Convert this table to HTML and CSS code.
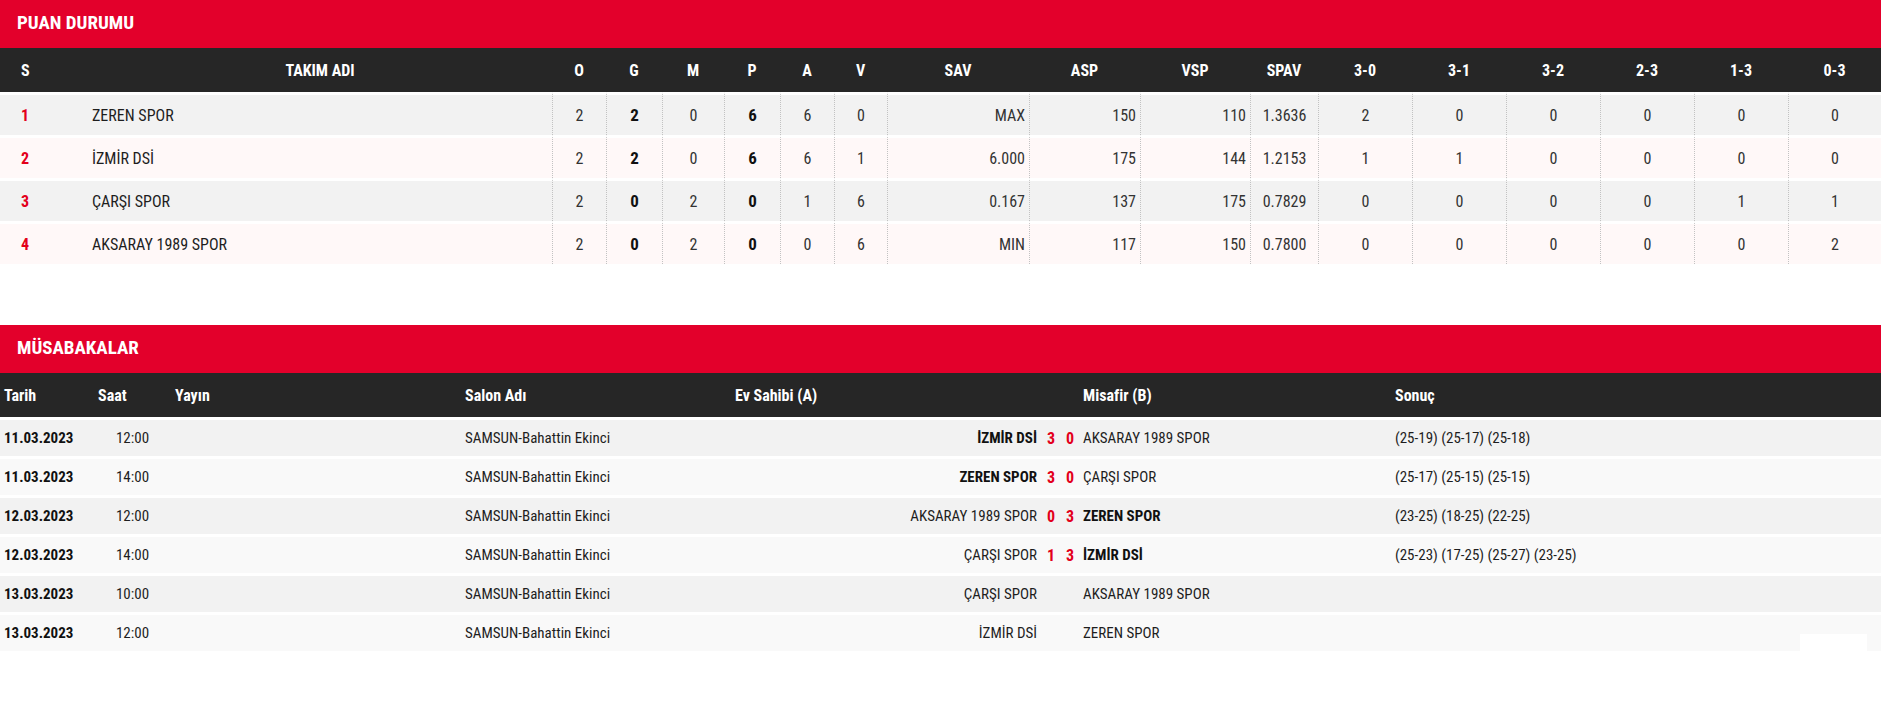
FILE: index.html
```html
<!DOCTYPE html>
<html lang="tr">
<head>
<meta charset="utf-8">
<title>Puan Durumu</title>
<link rel="stylesheet" href="styles.css">
</head>
<body>
<section class="block">
  <h2 class="block-title">PUAN DURUMU</h2>
  <table class="standings">
    <colgroup>
      <col class="c-s"><col class="c-name"><col class="c-o"><col class="c-g"><col class="c-m"><col class="c-p"><col class="c-a"><col class="c-v">
      <col class="c-sav"><col class="c-asp"><col class="c-vsp"><col class="c-spav">
      <col class="c-r"><col class="c-r"><col class="c-r"><col class="c-r"><col class="c-r"><col class="c-rl">
    </colgroup>
    <thead>
      <tr>
        <th class="pos-h">S</th><th>TAKIM ADI</th><th>O</th><th>G</th><th>M</th><th>P</th><th>A</th><th>V</th>
        <th>SAV</th><th>ASP</th><th>VSP</th><th>SPAV</th>
        <th>3-0</th><th>3-1</th><th>3-2</th><th>2-3</th><th>1-3</th><th>0-3</th>
      </tr>
    </thead>
    <tbody>
      <tr>
        <td class="pos">1</td><td class="team">ZEREN SPOR</td>
        <td class="n">2</td><td class="n b">2</td><td class="n">0</td><td class="n b">6</td><td class="n">6</td><td class="n">0</td>
        <td class="n r">MAX</td><td class="n r">150</td><td class="n r">110</td><td class="n">1.3636</td>
        <td class="n">2</td><td class="n">0</td><td class="n">0</td><td class="n">0</td><td class="n">0</td><td class="n">0</td>
      </tr>
      <tr>
        <td class="pos">2</td><td class="team">İZMİR DSİ</td>
        <td class="n">2</td><td class="n b">2</td><td class="n">0</td><td class="n b">6</td><td class="n">6</td><td class="n">1</td>
        <td class="n r">6.000</td><td class="n r">175</td><td class="n r">144</td><td class="n">1.2153</td>
        <td class="n">1</td><td class="n">1</td><td class="n">0</td><td class="n">0</td><td class="n">0</td><td class="n">0</td>
      </tr>
      <tr>
        <td class="pos">3</td><td class="team">ÇARŞI SPOR</td>
        <td class="n">2</td><td class="n b">0</td><td class="n">2</td><td class="n b">0</td><td class="n">1</td><td class="n">6</td>
        <td class="n r">0.167</td><td class="n r">137</td><td class="n r">175</td><td class="n">0.7829</td>
        <td class="n">0</td><td class="n">0</td><td class="n">0</td><td class="n">0</td><td class="n">1</td><td class="n">1</td>
      </tr>
      <tr>
        <td class="pos">4</td><td class="team">AKSARAY 1989 SPOR</td>
        <td class="n">2</td><td class="n b">0</td><td class="n">2</td><td class="n b">0</td><td class="n">0</td><td class="n">6</td>
        <td class="n r">MIN</td><td class="n r">117</td><td class="n r">150</td><td class="n">0.7800</td>
        <td class="n">0</td><td class="n">0</td><td class="n">0</td><td class="n">0</td><td class="n">0</td><td class="n">2</td>
      </tr>
    </tbody>
  </table>
</section>

<section class="block block-matches">
  <h2 class="block-title">MÜSABAKALAR</h2>
  <table class="matches">
    <colgroup>
      <col class="m-date"><col class="m-time"><col class="m-tv"><col class="m-hall"><col class="m-home"><col class="m-sa"><col class="m-sb"><col class="m-away"><col class="m-res">
    </colgroup>
    <thead>
      <tr>
        <th>Tarih</th><th>Saat</th><th>Yayın</th><th>Salon Adı</th><th>Ev Sahibi (A)</th><th></th><th></th><th>Misafir (B)</th><th>Sonuç</th>
      </tr>
    </thead>
    <tbody>
      <tr>
        <td class="date">11.03.2023</td><td class="time">12:00</td><td></td><td>SAMSUN-Bahattin Ekinci</td>
        <td class="home win">İZMİR DSİ</td><td class="score">3</td><td class="score">0</td><td class="away">AKSARAY 1989 SPOR</td><td>(25-19) (25-17) (25-18)</td>
      </tr>
      <tr>
        <td class="date">11.03.2023</td><td class="time">14:00</td><td></td><td>SAMSUN-Bahattin Ekinci</td>
        <td class="home win">ZEREN SPOR</td><td class="score">3</td><td class="score">0</td><td class="away">ÇARŞI SPOR</td><td>(25-17) (25-15) (25-15)</td>
      </tr>
      <tr>
        <td class="date">12.03.2023</td><td class="time">12:00</td><td></td><td>SAMSUN-Bahattin Ekinci</td>
        <td class="home">AKSARAY 1989 SPOR</td><td class="score">0</td><td class="score">3</td><td class="away win">ZEREN SPOR</td><td>(23-25) (18-25) (22-25)</td>
      </tr>
      <tr>
        <td class="date">12.03.2023</td><td class="time">14:00</td><td></td><td>SAMSUN-Bahattin Ekinci</td>
        <td class="home">ÇARŞI SPOR</td><td class="score">1</td><td class="score">3</td><td class="away win">İZMİR DSİ</td><td>(25-23) (17-25) (25-27) (23-25)</td>
      </tr>
      <tr>
        <td class="date">13.03.2023</td><td class="time">10:00</td><td></td><td>SAMSUN-Bahattin Ekinci</td>
        <td class="home">ÇARŞI SPOR</td><td class="score"></td><td class="score"></td><td class="away">AKSARAY 1989 SPOR</td><td></td>
      </tr>
      <tr>
        <td class="date">13.03.2023</td><td class="time">12:00</td><td></td><td>SAMSUN-Bahattin Ekinci</td>
        <td class="home">İZMİR DSİ</td><td class="score"></td><td class="score"></td><td class="away">ZEREN SPOR</td><td class="last-cell"></td>
      </tr>
    </tbody>
  </table>
</section>
</body>
</html>
```

FILE: styles.css
```css
html, body {
  margin: 0;
  padding: 0;
  background: #fff;
}

body {
  font-family: "Roboto Condensed", Roboto, "Liberation Sans Narrow", sans-serif;
  font-stretch: 75%;
  color: #222;
  font-size: 16px;
}

.block {
  width: 1881px;
}

.block-matches {
  margin-top: 61px;
  position: relative;
}

.block-title {
  margin: 0;
  height: 48px;
  box-sizing: border-box;
  padding: 12px 17px 0;
  line-height: 22px;
  font-size: 19px;
  font-weight: 700;
  color: #fff;
  background: #e3002b;
}

table {
  width: 100%;
  table-layout: fixed;
  border-collapse: separate;
  border-spacing: 0;
}

th {
  background: #262626;
  color: #fff;
  font-weight: 700;
  padding: 0;
}

/* ---------- Standings ---------- */
.c-s { width: 88px; }
.c-name { width: 464px; }
.c-o { width: 54px; }
.c-g { width: 56px; }
.c-m { width: 62px; }
.c-p { width: 56px; }
.c-a { width: 54px; }
.c-v { width: 53px; }
.c-sav { width: 142px; }
.c-asp { width: 111px; }
.c-vsp { width: 110px; }
.c-spav { width: 68px; }
.c-r { width: 94px; }
.c-rl { width: 93px; }

.standings th {
  height: 44px;
  font-size: 16px;
  text-align: center;
}

.standings th.pos-h {
  text-align: left;
  padding-left: 21px;
}

.standings td {
  height: 40px;
  padding: 0 5px;
  border-top: 3px solid #fff;
  font-size: 16px;
  text-align: center;
  white-space: nowrap;
}

.standings tbody tr:nth-child(odd) td { background-color: #f2f2f2; }
.standings tbody tr:nth-child(even) td { background-color: #fff8f8; }

.standings td.pos {
  color: #e3001b;
  font-weight: 700;
  text-align: left;
  padding-left: 21px;
}

.standings td.team {
  text-align: left;
  padding-left: 4px;
  color: #1e1e1e;
}

.standings td.n {
  border-left: 1px dotted #c2c2c2;
  color: #333;
}

.standings td.b {
  font-weight: 700;
  font-size: 17px;
  color: #111;
}

.standings td.r {
  text-align: right;
  padding-right: 4px;
}

/* ---------- Matches ---------- */
.m-date { width: 94px; }
.m-time { width: 77px; }
.m-tv { width: 290px; }
.m-hall { width: 270px; }
.m-home { width: 310px; }
.m-sa { width: 20px; }
.m-sb { width: 18px; }
.m-away { width: 312px; }
.m-res { width: 490px; }

.matches th {
  height: 44px;
  font-size: 16px;
  text-align: left;
  padding-left: 4px;
}

.matches td {
  height: 36px;
  padding: 0 0 0 4px;
  border-top: 3px solid #fff;
  font-size: 15px;
  white-space: nowrap;
  color: #1e1e1e;
}

.matches tbody tr:nth-child(odd) td { background-color: #f2f2f2; }
.matches tbody tr:nth-child(even) td { background-color: #f9f9f9; }

.matches td.date {
  font-weight: 700;
  color: #111;
}

.matches td.time {
  text-align: center;
  padding-left: 0;
}

.matches td.home {
  text-align: right;
  padding: 0 4px 0 0;
}

.matches td.score {
  text-align: center;
  padding: 0;
  color: #e3001b;
  font-weight: 700;
  font-size: 16px;
}

.matches td.win {
  font-weight: 700;
  color: #111;
}

.matches td.last-cell {
  position: relative;
}

.matches td.last-cell::after {
  content: "";
  position: absolute;
  right: 14px;
  bottom: 0;
  width: 67px;
  height: 17px;
  background: #fff;
}
```
